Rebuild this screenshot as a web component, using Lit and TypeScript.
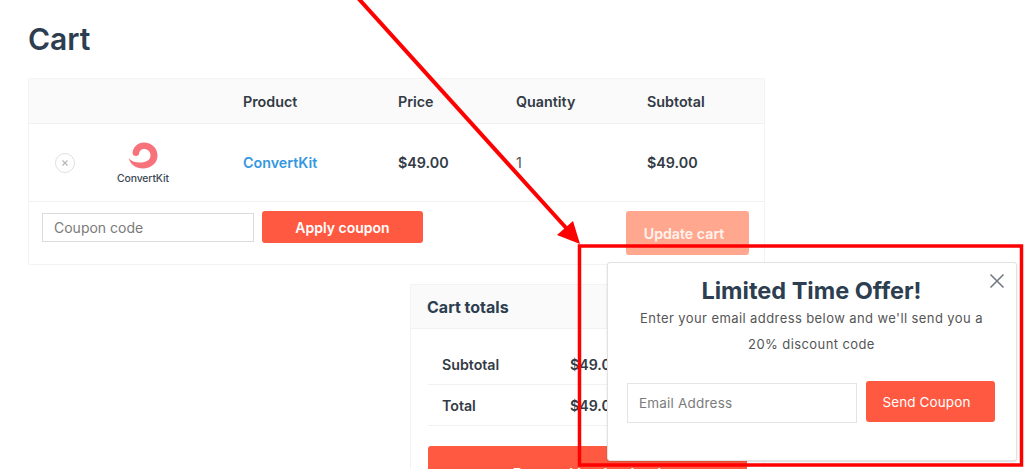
import { LitElement, html, css } from "lit";
import { customElement } from "lit/decorators.js";

@customElement("app-root")
export class AppRoot extends LitElement {
  static styles = css`
    :host { display: block; position: relative; width: 1024px; height: 469px; overflow: hidden; background: #fff; font-family: Inter, "Liberation Sans", sans-serif; color: #333b45; }
    .page { padding: 19px 0 0 28px; width: 737px; }
    h1 { margin: 0 0 19px; font-size: 30px; line-height: 40px; font-weight: 600; color: #2c3e50; }
    .table { border: 1px solid #f3f3f3; border-radius: 2px; box-sizing: border-box; height: 187px; }
    .row { display: grid; grid-template-columns: 214px 155px 118px 131px 1fr; align-items: center; font-size: 14.3px; font-weight: 600; }
    .head { height: 44px; background: #fafafa; border-bottom: 1px solid #f1f1f1; }
    .item { height: 77px; border-bottom: 1px solid #f1f1f1; }
    .thumb { display: flex; align-items: center; }
    .remove { margin-left: 26px; width: 18px; height: 18px; border: 1px solid #dfdfdf; border-radius: 50%; display: flex; align-items: center; justify-content: center; }
    .logo { margin-left: 40px; width: 56px; display: flex; flex-direction: column; align-items: center; gap: 4px; margin-top: 2px; }
    .logo span { font-size: 10.4px; font-weight: 500; color: #3c4754; letter-spacing: -0.1px; line-height: 12px; white-space: nowrap; }
    .link { color: #3498e0; }
    .qty { font-weight: 400; color: #555; }
    .coupon { display: flex; align-items: flex-start; padding: 9px 15px 0 13px; }
    .field { box-sizing: border-box; border: 1px solid #dcdcdc; background: #fff; color: #7b7b7b; display: flex; align-items: center; font-weight: 400; }
    .coupon .field { width: 212px; height: 29px; margin-top: 2px; padding-left: 11px; font-size: 14px; }
    .btn { background: #ff5a41; color: #fff; border-radius: 3px; display: flex; align-items: center; justify-content: center; font-weight: 600; font-size: 14px; box-sizing: border-box; }
    .apply { width: 161px; height: 32px; margin-left: 8px; }
    .update { width: 123px; height: 44px; margin-left: auto; background: #ffa88f; color: #fff3ee; padding-right: 7px; font-size: 14.2px; }
    .totals { position: absolute; left: 410px; top: 284px; width: 355px; height: 200px; border: 1px solid #f3f3f3; box-sizing: border-box; }
    .totals h2 { margin: 0; height: 43px; background: #fafafa; border-bottom: 1px solid #f1f1f1; font-size: 16px; font-weight: 700; color: #2c3e50; display: flex; align-items: center; padding-left: 16px; }
    .lines { padding: 15px 16px 0 17px; }
    .line { height: 40px; display: grid; grid-template-columns: 128px 1fr; align-items: center; padding-left: 14px; border-bottom: 1px solid #f1f1f1; font-size: 14.2px; font-weight: 600; }
    .checkout { margin: 20px 0 0 0; height: 50px; width: 319px; align-items: flex-start; padding-top: 18px; font-size: 15px; }
    .popup { position: absolute; left: 607px; top: 262px; width: 410px; height: 199px; box-sizing: border-box; background: #fff; border: 1px solid #e2e2e2; border-radius: 3px; box-shadow: 0 1px 2px rgba(0,0,0,.15); text-align: center; padding: 12px 20px 0 19px; }
    .popup h3 { margin: 0; font-size: 23.5px; line-height: 32px; font-weight: 700; color: #2c3e50; }
    .popup p { margin: -1px 0 0; font-size: 13px; line-height: 25.5px; letter-spacing: 0.41px; color: #555; }
    .close { position: absolute; right: 11px; top: 10px; width: 16px; height: 16px; }
    .form { display: flex; align-items: flex-end; margin-top: 24px; gap: 9px; }
    .form .field { width: 230px; height: 40px; padding-left: 11px; font-size: 13.5px; letter-spacing: 0.2px; border-color: #e4e4e4; margin-bottom: -1px; }
    .send { width: 129px; height: 41px; font-size: 13.5px; font-weight: 400; letter-spacing: 0.1px; padding: 0 8px 0 0; }
    .mark { position: absolute; left: 0; top: 0; width: 1024px; height: 469px; pointer-events: none; }
  `;

  render() {
    return html`
      <div class="page">
        <h1>Cart</h1>
        <div class="table">
          <div class="row head">
            <span></span><span>Product</span><span>Price</span><span>Quantity</span><span>Subtotal</span>
          </div>
          <div class="row item">
            <div class="thumb">
              <div class="remove">
                <svg width="8" height="8" viewBox="0 0 8 8"><path d="M1.5 1.5l5 5M6.500 1.500l-5 5" stroke="#b5b5b5" stroke-width="1.100" fill="none"/></svg>
              </div>
              <div class="logo">
                <svg width="30" height="27" viewBox="0 0 30 27"><path fill="#f7727a" d="M0.500 16C3 19 7 20.500 12 20.500C18 20.500 22.500 18 22.500 13.500C22.500 9.500 19.500 7 16 7C13.500 7 11.500 8.500 11 11.500C11 13 10 14 8 14C6 14 4.500 13 4.500 11C5 5 10 0.500 16 0.500C23.500 0.500 29.500 6 29.500 13.500C29.500 21 23 26.500 15 26.500C8 26.500 2.500 22.500 0.500 16z"/></svg>
                <span>ConvertKit</span>
              </div>
            </div>
            <span class="link">ConvertKit</span><span>$49.00</span><span class="qty">1</span><span>$49.00</span>
          </div>
          <div class="coupon">
            <div class="field">Coupon code</div>
            <div class="btn apply">Apply coupon</div>
            <div class="btn update">Update cart</div>
          </div>
        </div>
      </div>

      <div class="totals">
        <h2>Cart totals</h2>
        <div class="lines">
          <div class="line"><span>Subtotal</span><span>$49.00</span></div>
          <div class="line"><span>Total</span><span>$49.00</span></div>
          <div class="btn checkout">Proceed to checkout</div>
        </div>
      </div>

      <svg class="mark" viewBox="0 0 1024 469">
        <path d="M358 -2L568 230" stroke="#ff0000" stroke-width="4" fill="none"/>
        <path d="M580 244L557 235L573 221z" fill="#ff0000"/>
        <rect x="579.500" y="246" width="442" height="219" stroke="#ff0000" stroke-width="3.500" fill="none"/>
      </svg>

      <div class="popup">
        <svg class="close" viewBox="0 0 16 16"><path d="M1.500 1.500l13 13M14.500 1.500l-13 13" stroke="#6d7680" stroke-width="1.500" fill="none"/></svg>
        <h3>Limited Time Offer!</h3>
        <p>Enter your email address below and we'll send you a<br />20% discount code</p>
        <div class="form">
          <div class="field">Email Address</div>
          <div class="btn send">Send Coupon</div>
        </div>
      </div>
    `;
  }
}
